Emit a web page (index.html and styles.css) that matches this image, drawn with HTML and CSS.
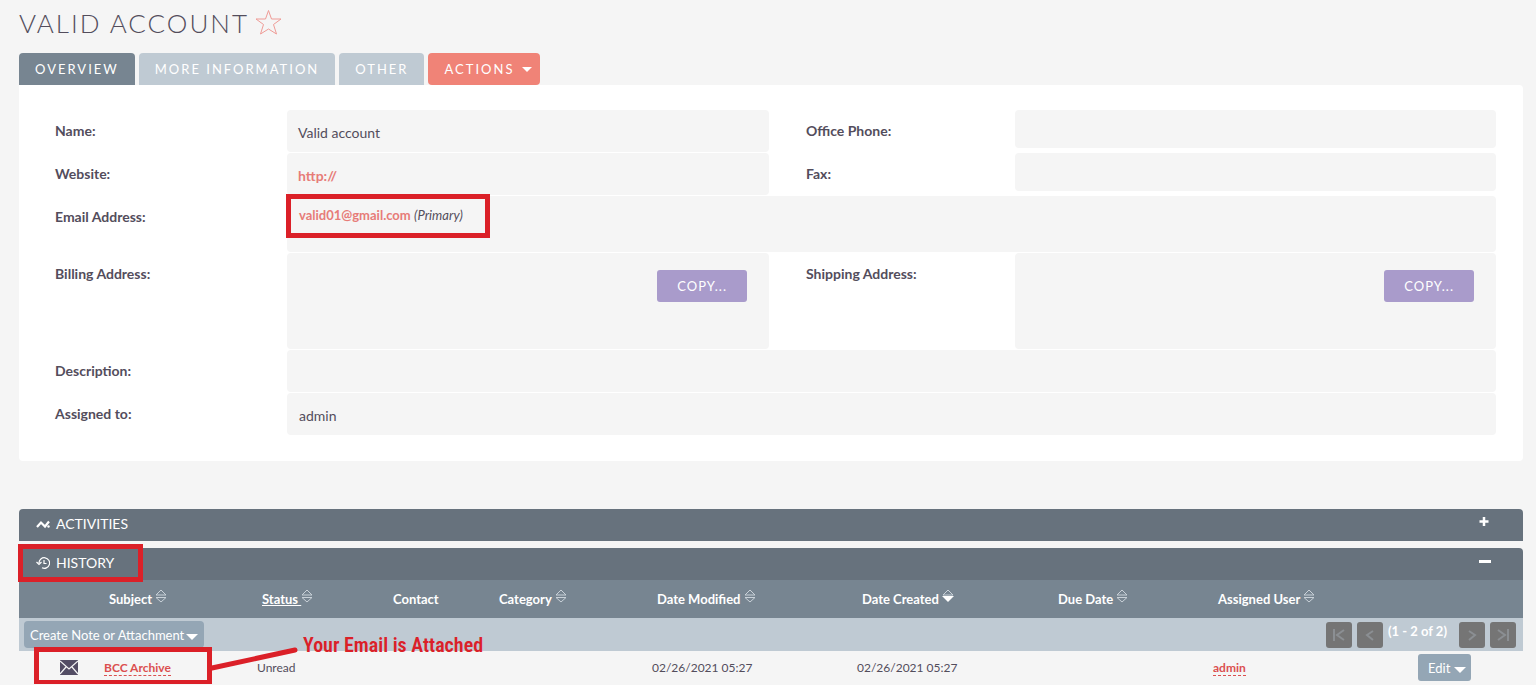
FILE: index.html
```html
<!DOCTYPE html>
<html lang="en">
<head>
    <meta charset="UTF-8">
    <meta name="viewport" content="width=device-width, initial-scale=1.0">
    <title>Valid account</title>
    <link rel="stylesheet" href="styles.css">
</head>
<body>

<!-- shared sort arrows -->
<svg class="sprite" aria-hidden="true">
    <symbol id="sort" viewBox="0 0 12 14">
        <path d="M1 6 L6 1 L11 6 Z M1 8.500 H11 L6 13 Z" fill="none" stroke="currentColor"/>
    </symbol>
    <symbol id="sort-down" viewBox="0 0 12 14">
        <path d="M1 6 L6 1 L11 6 Z" fill="none" stroke="currentColor"/>
        <path d="M0 7 H12 L6 13 Z" fill="#fff"/>
    </symbol>
</svg>

<main class="page">
    <header class="title-bar">
        <h1>Valid account</h1>
        <button class="favorite" aria-label="Add to favorites">
            <svg width="27" height="27" viewBox="0 0 27 27"><path d="M13.500 1.500 L16.500 10 H26 L18.500 15.500 L21.500 25 L13.500 20 L5.500 25 L8.500 15.500 L1 10 H10.500 Z" fill="none" stroke="#ef9b96"/></svg>
        </button>
    </header>

    <nav class="tabs">
        <button class="tab active">Overview</button>
        <button class="tab">More Information</button>
        <button class="tab">Other</button>
        <button class="tab actions">Actions <span class="caret"></span></button>
    </nav>

    <section class="detail">
        <div class="label">Name:</div>
        <div class="value">Valid account</div>
        <div class="label second">Office Phone:</div>
        <div class="value short"></div>

        <div class="label">Website:</div>
        <div class="value"><a href="#">http://</a></div>
        <div class="label second">Fax:</div>
        <div class="value short"></div>

        <div class="label">Email Address:</div>
        <div class="value wide email">
            <a href="#">valid01@gmail.com</a> <em>(Primary)</em>
            <span class="mark mark-email"></span>
        </div>

        <div class="label">Billing Address:</div>
        <div class="value address"><button class="copy">Copy...</button></div>
        <div class="label second">Shipping Address:</div>
        <div class="value address"><button class="copy">Copy...</button></div>

        <div class="label">Description:</div>
        <div class="value wide"></div>

        <div class="label">Assigned to:</div>
        <div class="value wide">admin</div>
    </section>

    <section class="subpanel">
        <h2 class="subpanel-head">
            <svg class="head-icon" width="14" height="14" viewBox="0 0 14 14"><path d="M1 10 L5 5.500 L9 9.500 L13 4.500" fill="none" stroke="#fff" stroke-width="2.200"/><circle cx="12.500" cy="9.500" r="1.200" fill="#fff"/></svg>
            Activities
            <button class="toggle" aria-label="Expand">
                <svg width="12" height="12" viewBox="0 0 12 12"><path d="M5 1 V10 M0.500 5.500 H9.500" stroke="#fff" stroke-width="2.500"/></svg>
            </button>
        </h2>
    </section>

    <section class="subpanel">
        <h2 class="subpanel-head">
            <svg class="head-icon" width="14" height="14" viewBox="0 0 14 14"><path d="M3 7 A5.300 5.300 0 1 1 6 11.800 M0.500 6 L3 8.500 L5.500 6 M8 4 V7.500 H10.500" fill="none" stroke="#fff" stroke-width="1.200"/></svg>
            History
            <button class="toggle" aria-label="Collapse">
                <svg width="12" height="12" viewBox="0 0 12 12"><path d="M0 6.500 H12" stroke="#fff" stroke-width="3"/></svg>
            </button>
            <span class="mark mark-history"></span>
        </h2>

        <table class="list">
            <colgroup>
                <col class="c-icon"><col class="c-subject"><col class="c-status"><col class="c-contact"><col class="c-category">
                <col class="c-date"><col class="c-created"><col class="c-due"><col class="c-date"><col class="c-edit">
            </colgroup>
            <thead>
                <tr class="columns">
                    <th></th>
                    <th>Subject <svg class="sort"><use href="#sort"/></svg></th>
                    <th><u>Status <svg class="sort"><use href="#sort"/></svg></u></th>
                    <th>Contact</th>
                    <th>Category <svg class="sort"><use href="#sort"/></svg></th>
                    <th>Date Modified <svg class="sort"><use href="#sort"/></svg></th>
                    <th>Date Created <svg class="sort"><use href="#sort-down"/></svg></th>
                    <th>Due Date <svg class="sort"><use href="#sort"/></svg></th>
                    <th>Assigned User <svg class="sort"><use href="#sort"/></svg></th>
                    <th></th>
                </tr>
                <tr>
                    <td colspan="10" class="tools">
                        <div class="toolbar">
                            <button class="create">Create Note or Attachment<span class="caret"></span></button>
                            <div class="pager">
                                <button disabled aria-label="First"><svg width="16" height="16" viewBox="0 0 16 16"><path d="M3 2 V14 M13 3 L6 8 L13 13"/></svg></button>
                                <button disabled aria-label="Previous"><svg width="16" height="16" viewBox="0 0 16 16"><path d="M11 4 L5 8 L11 13"/></svg></button>
                                <span class="count">(1 - 2 of 2)</span>
                                <button disabled aria-label="Next"><svg width="16" height="16" viewBox="0 0 16 16"><path d="M5 4 L11 8 L5 13"/></svg></button>
                                <button disabled aria-label="Last"><svg width="16" height="16" viewBox="0 0 16 16"><path d="M13 2 V14 M3 3 L10 8 L3 13"/></svg></button>
                            </div>
                        </div>
                    </td>
                </tr>
            </thead>
            <tbody>
                <tr class="record">
                    <td class="icon-cell">
                        <svg class="mail" width="18" height="15" viewBox="0 0 18 15"><rect width="18" height="15" fill="#534d64"/><path d="M0 1 L9 9 L18 1 M0 14 L6 7 M18 14 L12 7" fill="none" stroke="#f5f5f5" stroke-width="1.200"/></svg>
                        <div class="mark mark-row"></div>
                        <svg class="pointer" width="90" height="26" viewBox="0 0 90 26"><path d="M2 22 L85 4" stroke="#db2028" stroke-width="5" stroke-linecap="round"/></svg>
                        <span class="note">Your Email is Attached</span>
                    </td>
                    <td><a href="#">BCC Archive</a></td>
                    <td>Unread</td>
                    <td></td>
                    <td></td>
                    <td>02/26/2021 05:27</td>
                    <td>02/26/2021 05:27</td>
                    <td></td>
                    <td><a href="#">admin</a></td>
                    <td><button class="edit">Edit <span class="caret"></span></button></td>
                </tr>
            </tbody>
        </table>
    </section>
</main>

</body>
</html>
```
FILE: styles.css
```css
* {
    box-sizing: border-box;
}

body {
    margin: 0;
    background-color: #f5f5f5;
    color: #534d5c;
    font-family: Lato, sans-serif;
    font-size: 14px;
    line-height: 20px;
}

button {
    border: 0;
    padding: 0;
    font: inherit;
    color: #fff;
    cursor: pointer;
}

a {
    color: #e77c78;
    font-weight: bold;
    text-decoration: none;
}

.sprite {
    display: none;
}

.page {
    padding: 0 13px 0 19px;
}

.title-bar {
    display: flex;
    align-items: center;
    gap: 6px;
    height: 53px;
    padding-bottom: 8px;
}

h1 {
    margin: 0;
    font-size: 26px;
    font-weight: 300;
    letter-spacing: 2px;
    text-transform: uppercase;
}

.favorite {
    display: flex;
    background: none;
}

/* Tabs */
.tabs {
    display: flex;
    gap: 4px;
}

.tab {
    height: 32px;
    padding: 0 16px;
    border-radius: 4px 4px 0 0;
    background-color: #bfcad3;
    font-size: 13px;
    letter-spacing: 2px;
    text-transform: uppercase;
}

.tab.active {
    background-color: #778591;
}

.tab.actions {
    padding-right: 8px;
    border-radius: 4px;
    background-color: #f08377;
}

.caret {
    display: inline-block;
    border: 6px solid transparent;
    border-top-color: #fff;
    border-bottom: 0;
}

.tab .caret {
    margin-left: 2px;
    border-width: 5px 5px 0;
    vertical-align: 2px;
}

/* Detail view */
.detail {
    display: grid;
    grid-template-columns: 232fr 482fr 246fr 481fr;
    row-gap: 1px;
    padding: 25px 27px 26px 36px;
    margin-bottom: 48px;
    border-radius: 0 4px 4px 4px;
    background-color: #fff;
}

.label {
    padding-top: 11px;
    font-weight: bold;
}

.label.second {
    padding-left: 37px;
}

.value {
    min-height: 42px;
    padding: 13px 11px 9px;
    border-radius: 4px;
    background-color: #f5f5f5;
}

.value.short {
    min-height: 38px;
    align-self: start;
}

.value.wide {
    grid-column: span 3;
    padding-left: 12px;
}

.value.email {
    position: relative;
    min-height: 56px;
    padding-top: 9px;
    font-size: 13px;
}

.value.address {
    display: flex;
    justify-content: flex-end;
    align-items: flex-start;
    min-height: 96px;
    padding: 17px 22px;
}

.copy {
    height: 32px;
    padding: 0 20px;
    border-radius: 3px;
    background-color: #a99bcb;
    font-size: 13px;
    letter-spacing: 1px;
    text-transform: uppercase;
}

/* Subpanels */
.subpanel {
    margin-bottom: 7px;
}

.subpanel:last-child {
    margin-bottom: 0;
}

.subpanel-head {
    position: relative;
    display: flex;
    align-items: center;
    gap: 6px;
    height: 32px;
    margin: 0;
    padding: 0 32px 2px 17px;
    border-radius: 4px 4px 0 0;
    background-color: #67727d;
    color: #fff;
    font-size: 14px;
    font-weight: normal;
    text-transform: uppercase;
}

.toggle {
    display: flex;
    margin-left: auto;
    padding-bottom: 4px;
    background: none;
}

/* List table */
.list {
    width: 100%;
    border-collapse: collapse;
    table-layout: fixed;
}

.c-icon { width: 85px; }
.c-subject { width: 153px; }
.c-status { width: 131px; }
.c-contact { width: 106px; }
.c-category { width: 158px; }
.c-date { width: 205px; }
.c-created { width: 196px; }
.c-due { width: 160px; }
.c-edit { width: 105px; }

.list th,
.list td {
    padding: 0;
    text-align: left;
    white-space: nowrap;
}

.columns th {
    height: 38px;
    padding-left: 5px;
    background-color: #778591;
    color: #fff;
    font-size: 13px;
}

.sort {
    width: 12px;
    height: 14px;
    color: #c9d1d8;
    vertical-align: 1px;
}

.list .tools {
    height: 33px;
    padding: 3px 7px 3px 5px;
    background-color: #bfcad3;
}

.toolbar,
.pager {
    display: flex;
    justify-content: space-between;
    align-items: center;
    gap: 5px;
}

.create {
    height: 27px;
    padding: 0 6px;
    border-radius: 4px;
    background-color: #94a6b5;
    font-size: 13px;
}

.create .caret {
    margin-left: 2px;
}

.pager button {
    display: flex;
    justify-content: center;
    align-items: center;
    width: 26px;
    height: 26px;
    border-radius: 3px;
    background-color: #757575;
}

.pager path {
    fill: none;
    stroke: #8b8f93;
    stroke-width: 2;
}

.count {
    width: 66px;
    padding-bottom: 7px;
    color: #fff;
    font-weight: bold;
    font-size: 13px;
}

.record td {
    height: 33px;
    font-size: 12px;
}

.record a {
    border-bottom: 1px dashed #db4f4f;
    color: #db4f4f;
}

.icon-cell {
    position: relative;
}

.mail {
    display: block;
    margin-left: 41px;
}

.edit {
    height: 27px;
    padding: 0 5px 0 10px;
    border-radius: 3px;
    background-color: #94a6b5;
    font-size: 13px;
}

/* Red highlights drawn over the page */
.mark {
    position: absolute;
    border: 5px solid #db2028;
}

.mark-email {
    top: -2px;
    left: -1px;
    width: 204px;
    height: 44px;
}

.mark-history {
    top: -4px;
    left: -1px;
    width: 125px;
    height: 38px;
}

.mark-row {
    top: -4px;
    left: 15px;
    width: 178px;
    height: 38px;
}

.pointer {
    position: absolute;
    top: -5px;
    left: 191px;
}

.note {
    position: absolute;
    top: -16px;
    left: 284px;
    color: #db2028;
    font-family: "Roboto Condensed", "Liberation Sans Narrow", sans-serif;
    font-size: 20px;
    font-weight: 600;
}
```
